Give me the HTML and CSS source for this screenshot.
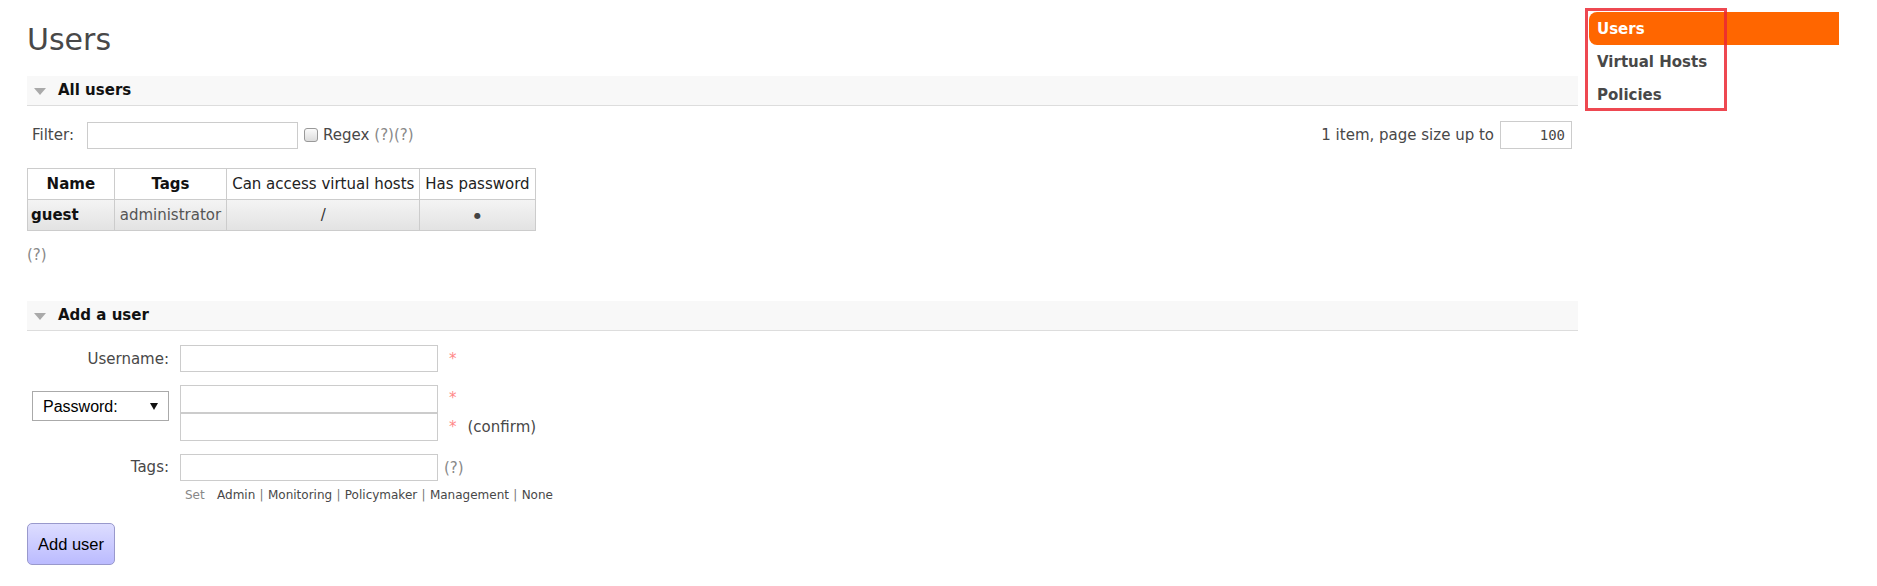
FILE: index.html
```html
<!DOCTYPE html>
<html lang="en">
<head>
    <meta charset="UTF-8">
    <title>RabbitMQ Management - Users</title>
    <link rel="stylesheet" href="styles.css">
</head>
<body>
    <div class="layout">
        <div class="main">
            <h1>Users</h1>

            <div class="section">
                <h2 class="section-head"><span class="toggle"></span>All users</h2>
                <div class="filter-row">
                    <div class="filter-left">
                        <label>Filter:</label>
                        <input type="text" class="filter-input">
                        <input type="checkbox" class="checkbox">
                        <span>Regex</span>
                        <span class="help">(?)(?)</span>
                    </div>
                    <div class="filter-right">
                        <span>1 item, page size up to</span>
                        <input type="text" class="page-size" value="100">
                    </div>
                </div>
                <table class="list">
                    <thead>
                        <tr>
                            <th>Name</th>
                            <th>Tags</th>
                            <th class="plain">Can access virtual hosts</th>
                            <th class="plain">Has password</th>
                        </tr>
                    </thead>
                    <tbody>
                        <tr>
                            <td class="name">guest</td>
                            <td class="tags">administrator</td>
                            <td class="c">/</td>
                            <td class="c dot">&#9679;</td>
                        </tr>
                    </tbody>
                </table>
                <p class="help help-line">(?)</p>
            </div>

            <div class="section add-section">
                <h2 class="section-head"><span class="toggle"></span>Add a user</h2>
                <div class="form">
                    <div class="form-row">
                        <div class="form-label">Username:</div>
                        <input type="text" class="field">
                        <span class="mand">*</span>
                    </div>
                    <div class="form-row pw-row">
                        <div class="form-label">
                            <span class="select-wrap">
                                <select class="pw-select"><option>Password:</option></select>
                                <span class="select-arrow"></span>
                            </span>
                        </div>
                        <div class="pw-fields">
                            <div class="pw-line">
                                <input type="password" class="field">
                                <span class="mand mand-top">*</span>
                            </div>
                            <div class="pw-line">
                                <input type="password" class="field field-joined">
                                <span class="mand">*</span>
                                <span class="confirm">(confirm)</span>
                            </div>
                        </div>
                    </div>
                    <div class="form-row tags-row">
                        <div class="form-label">Tags:</div>
                        <div class="tags-field">
                            <div class="pw-line">
                                <input type="text" class="field">
                                <span class="help help-tags">(?)</span>
                            </div>
                            <div class="tag-links">
                                <span class="set">Set</span>
                                <a>Admin</a> |
                                <a>Monitoring</a> |
                                <a>Policymaker</a> |
                                <a>Management</a> |
                                <a>None</a>
                            </div>
                        </div>
                    </div>
                    <button class="submit">Add user</button>
                </div>
            </div>
        </div>

        <div class="rhs">
            <ul>
                <li class="selected">Users</li>
                <li>Virtual Hosts</li>
                <li>Policies</li>
            </ul>
            <div class="highlight"></div>
        </div>
    </div>
</body>
</html>
```

FILE: styles.css
```css
body {margin: 0; font-family: "DejaVu Sans", Verdana, sans-serif; font-size: 15px; color: #484848; background: #fff;}
.layout {display: flex; align-items: flex-start;}
.main {margin-left: 27px; width: 1551px;}

h1 {font-size: 30px; font-weight: normal; color: #484848; margin: 22px 0 19px 0; line-height: 35px;}

.section-head {margin: 0; height: 29px; line-height: 29px; background: #f8f8f8; border-bottom: 1px solid #ddd; font-size: 15px; font-weight: bold; color: #111; display: flex; align-items: center; padding-left: 7px;}
.toggle {width: 0; height: 0; border-left: 6px solid transparent; border-right: 6px solid transparent; border-top: 7px solid #aaa; margin-right: 12px; margin-top: 1px;}

.filter-row {display: flex; justify-content: space-between; align-items: center; margin-top: 15px; padding: 0 6px 0 5px;}
.filter-left, .filter-right {display: flex; align-items: center;}
.filter-input {width: 211px; height: 27px; box-sizing: border-box; border: 1px solid #ccc; margin-left: 13px; padding: 0 4px;}
.checkbox {appearance: none; width: 14px; height: 14px; border: 1px solid #999; border-radius: 3px; background: linear-gradient(#fafafa, #dcdcdc); margin: 0 5px 0 6px;}
.help {color: #888;}
.filter-left .help {margin-left: 5px;}
.page-size {width: 72px; height: 28px; box-sizing: border-box; border: 1px solid #ccc; margin-left: 6px; text-align: right; font-family: "DejaVu Sans Mono", monospace; font-size: 14px; color: #484848; padding: 0 6px;}

table.list {border-collapse: collapse; margin-top: 19px;}
.list th, .list td {border: 1px solid #ccc; padding: 0 5px; height: 30px; text-align: center;}
.list th {background: #fff; color: #111; font-weight: bold;}
.list th.plain {font-weight: normal; color: #222;}
.list tbody tr {background: linear-gradient(#f4f4f4, #e2e2e2);}
.list td {color: #555;}
.list td.name {font-weight: bold; color: #111; text-align: left; padding: 0 35px 0 3px;}
.list td.tags {padding: 0 5px;}
.list td.c {color: #333;}
.list td.dot {font-size: 8px; color: #444;}

.help-line {margin: 15px 0 0 0;}

.add-section {margin-top: 37px;}

.form {padding-top: 14px;}
.form-row {display: flex; align-items: center; margin-bottom: 13px;}
.form-label {width: 142px; text-align: right; flex-shrink: 0;}
.field {width: 258px; height: 27px; box-sizing: border-box; border: 1px solid #ccc; margin-left: 11px; padding: 0 4px;}
.mand {color: #f88; margin-left: 11px;}
.confirm {margin-left: 11px;}

.pw-row {align-items: flex-start; margin-bottom: 13px;}
.pw-fields {display: flex; flex-direction: column;}
.pw-line {display: flex; align-items: center;}
.pw-fields .field {height: 28px;}
.mand-top {align-self: flex-start; margin-top: 4px;}

.select-wrap {position: relative; display: inline-block; margin: 6px 0 0 5px; float: left;}
.pw-select {appearance: none; width: 137px; height: 30px; border: 1px solid #aaa; background: #fff; font-family: "Liberation Sans", Arial, sans-serif; font-size: 16px; color: #000; padding: 0 0 0 10px; border-radius: 0;}
.select-arrow {position: absolute; right: 11px; top: 12px; width: 0; height: 0; border-left: 4px solid transparent; border-right: 4px solid transparent; border-top: 7px solid #111; pointer-events: none;}

.tags-row {align-items: flex-start; margin-bottom: 0;}
.tags-row .form-label {line-height: 27px;}
.tags-field {display: flex; flex-direction: column;}
.help-tags {margin-left: 6px;}
.tag-links {font-size: 12px; color: #777; margin: 7px 0 0 16px; word-spacing: 0.5px;}
.tag-links a {color: #484848;}
.tag-links .set {color: #888; margin-right: 8px;}

.submit {margin-top: 21px; width: 88px; height: 42px; border: 1px solid #99c; border-radius: 5px; background: linear-gradient(#ddf, #bbf); font-family: "Liberation Sans", Arial, sans-serif; font-size: 16.5px; color: #000; padding: 0;}

.rhs {position: relative; margin: 12px 0 0 11px; width: 250px;}
.rhs ul {list-style: none; margin: 0; padding: 0;}
.rhs li {height: 33px; line-height: 34px; padding-left: 8px; font-weight: bold; color: #484848;}
.rhs li.selected {background: #f60; color: #fff; border-radius: 8px 0 0 8px;}
.highlight {position: absolute; left: -4px; top: -4px; width: 142px; height: 103px; box-sizing: border-box; border: 3px solid rgba(235, 40, 50, 0.85);}
```
